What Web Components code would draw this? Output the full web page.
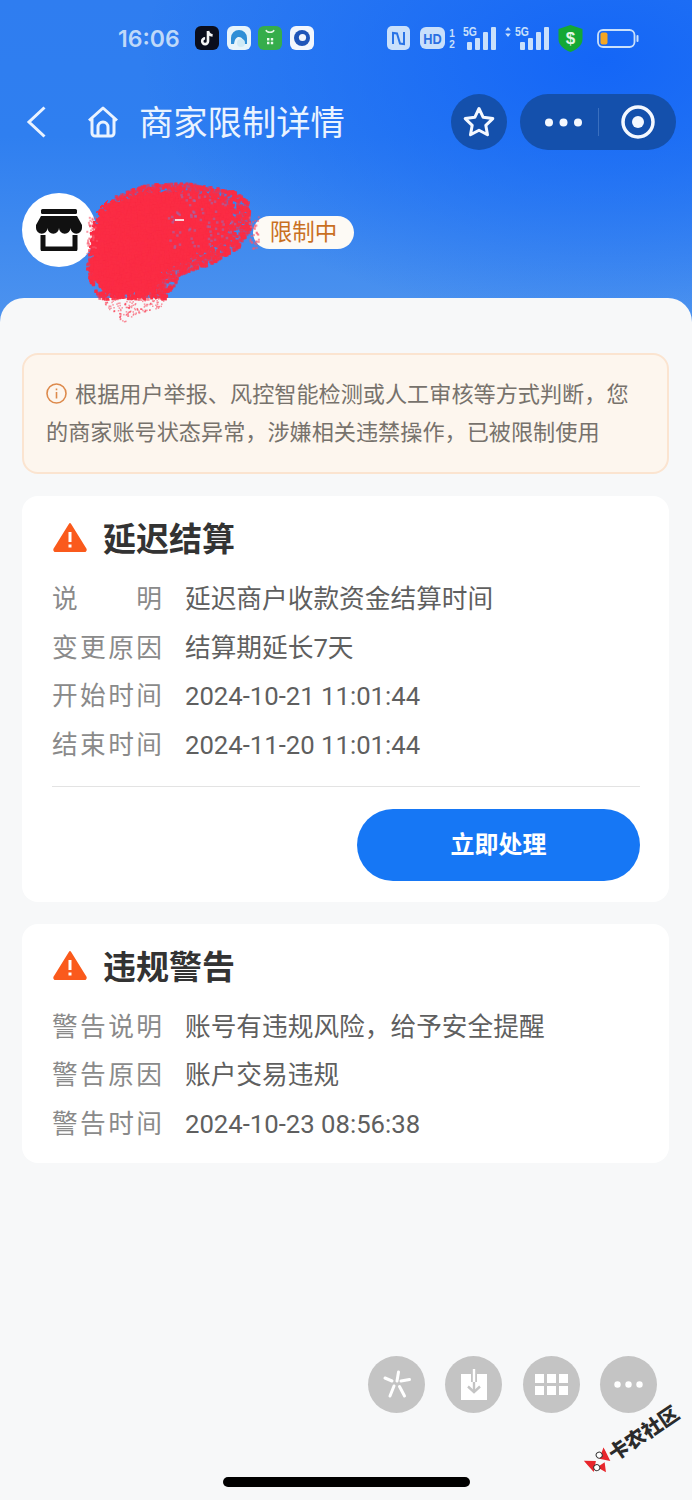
<!DOCTYPE html>
<html lang="zh">
<head>
<meta charset="utf-8">
<title>商家限制详情</title>
<style>
  html, body { margin: 0; padding: 0; background: #f7f8f9; }
  body { width: 692px; height: 1500px; overflow: hidden; font-family: "Noto Sans CJK SC", "Noto Sans", sans-serif; }
</style>
</head>
<body>
<merchant-page>
  <status-strip slot="top"></status-strip>
  <nav-strip slot="top" title="商家限制详情"></nav-strip>
  <merchant-head slot="top" state="限制中"></merchant-head>

  <notice-box>根据用户举报、风控智能检测或人工审核等方式判断，您的商家账号状态异常，涉嫌相关违禁操作，已被限制使用</notice-box>

  <limit-card heading="延迟结算" action="立即处理">
    <info-row label="说明">延迟商户收款资金结算时间</info-row>
    <info-row label="变更原因">结算期延长7天</info-row>
    <info-row label="开始时间">2024-10-21 11:01:44</info-row>
    <info-row label="结束时间">2024-11-20 11:01:44</info-row>
  </limit-card>

  <limit-card heading="违规警告">
    <info-row label="警告说明">账号有违规风险，给予安全提醒</info-row>
    <info-row label="警告原因">账户交易违规</info-row>
    <info-row label="警告时间">2024-10-23 08:56:38</info-row>
  </limit-card>
</merchant-page>
<scribble-mark></scribble-mark>
<float-tools></float-tools>
<water-mark></water-mark>
<home-bar></home-bar>

<script>
// helper: one shadow root per element, markup set in the class
function shadow(el, html) {
  el.attachShadow({mode: 'open'}).innerHTML = html
}

// PAGE SHELL _____________________________________________ */
class MerchantPage extends HTMLElement {
  constructor() {
    super()
    shadow(this, `
    <style>
    :host { display: block; width: 692px; height: 1500px;
      background:
        radial-gradient(460px 260px at 600px 60px, #1466f7 0%, rgba(20,102,247,0) 100%),
        linear-gradient(180deg, #2f7df0 0%, #2f7ff0 40%, #5095ee 100%);
      background-size: 100% 340px; background-repeat: no-repeat; }
    .top { display: block; height: 298px; }
    .sheet { display: flex; flex-direction: column; gap: 22px; box-sizing: border-box;
      height: 1202px; padding: 55px 23px 0 22px; background: #f7f8f9;
      border-radius: 24px 24px 0 0; }
    </style>
    <div class="top"><slot name="top"></slot></div>
    <div class="sheet"><slot></slot></div>`)
  }
}

// STATUS BAR _____________________________________________ */
class StatusStrip extends HTMLElement {
  constructor() {
    super()
    const pale = '#c9e0fb'
    const bars = h => h.map((v, i) => `<rect x="${i * 8}" y="${24 - v}" width="5" height="${v}" rx="1" fill="${pale}"/>`).join('')
    const fiveG = x => `<text transform="translate(${x} 12) scale(.8 1)" font-size="13" fill="${pale}">5G</text>`
    shadow(this, `
    <style>
    :host { display: flex; align-items: center; height: 76px; box-sizing: border-box;
      padding-left: 118px; color: ${pale}; font-family: Inter, "Liberation Sans", sans-serif; }
    .time { width: 77px; font-size: 23px; font-weight: 600; line-height: 24px; margin-top: 1px; color: #bfd9f9; }
    svg { display: block; flex: none; }
    .apps { display: flex; gap: 7.500px; width: 192px; }
    .sys { display: flex; align-items: center; }
    text { font-family: "Liberation Sans", sans-serif; font-weight: 700; }
    </style>
    <span class="time">16:06</span>
    <div class="apps">
      <svg width="24" height="24" viewBox="0 0 24 24"><rect width="24" height="24" rx="6" fill="#0a0d1c"/><path d="M13 5v10.200a2.900 2.900 0 1 1-2.900-2.900M13 5c.3 2.600 2 4.200 4.600 4.400" fill="none" stroke="#f4f4f6" stroke-width="2.600"/></svg>
      <svg width="24" height="24" viewBox="0 0 24 24"><rect width="24" height="24" rx="6" fill="#e6f4fb"/><path d="M4 18V12a8 8 0 0 1 16 0v6h-3c0-4-2-7-5-7s-4 2-5 7z" fill="#2f8fd6"/><circle cx="14" cy="17" r="4" fill="#cfeaf6"/></svg>
      <svg width="24" height="24" viewBox="0 0 24 24"><rect width="24" height="24" rx="6" fill="#35ad4b"/><path d="M8 4c.6 3 7.400 3 8 0" fill="none" stroke="#dff5e2" stroke-width="1.400"/><path d="M9 12h2.400v2.400H9zM12.800 12h2.400v2.400h-2.400zM9 15.800h2.400v2.400H9zM12.800 15.800h2.400v2.400h-2.400z" fill="#eafaec"/></svg>
      <svg width="24" height="24" viewBox="0 0 24 24"><rect width="24" height="24" rx="6" fill="#f2f6fd"/><circle cx="12" cy="12" r="8" fill="#1f55b8"/><circle cx="12.500" cy="11.500" r="3.600" fill="#f2f6fd"/></svg>
    </div>
    <div class="sys">
      <svg width="23" height="24" viewBox="0 0 23 24" style="margin-right:10px"><rect width="23" height="24" rx="5" fill="${pale}"/><path d="M6 18V7l4 .5 3 10 4 .5V6" fill="none" stroke="#2a74e6" stroke-width="2"/></svg>
      <svg width="36" height="24" viewBox="0 0 36 24" style="margin-right:7px"><rect y="1" width="25" height="22" rx="6" fill="${pale}"/><text transform="translate(12.500 17.500) scale(.85 1)" font-size="15" text-anchor="middle" fill="#2a6fe2">HD</text><text x="32" y="11" font-size="10" text-anchor="middle" fill="${pale}">1</text><text x="32" y="22" font-size="10" text-anchor="middle" fill="${pale}">2</text></svg>
      <svg width="34" height="28" viewBox="0 0 34 28" style="margin-right:8px">${fiveG(0)}<g transform="translate(4 2)">${bars([8, 12, 18, 23])}</g></svg>
      <svg width="44" height="28" viewBox="0 0 44 28" style="margin-right:8px"><path d="M3 3l2.800 3.400H.2zM3 13l2.800-3.400H.2z" fill="${pale}"/>${fiveG(10)}<g transform="translate(15 2)">${bars([8, 12, 18, 23])}</g></svg>
      <svg width="27" height="27" viewBox="0 0 27 27" style="margin-right:13px"><path d="M13.500 0l12 4v10c0 6-5 10.500-12 13C6.500 24.500 1.500 20 1.500 14V4z" fill="#14a834"/><text x="13.500" y="19" font-size="17" text-anchor="middle" fill="#e4f7e6">$</text></svg>
      <svg width="42" height="19" viewBox="0 0 42 19"><rect x="1" y="1" width="36.500" height="17" rx="5" fill="none" stroke="${pale}" stroke-width="1.800"/><rect x="3.500" y="3.500" width="7" height="12" rx="2" fill="#f5a623"/><rect x="39.500" y="6" width="2" height="7" rx="1" fill="${pale}"/></svg>
    </div>`)
  }
}

// NAV BAR ________________________________________________ */
class NavStrip extends HTMLElement {
  constructor() {
    super()
    shadow(this, `
    <style>
    :host { display: flex; align-items: center; height: 92px; box-sizing: border-box;
      padding-left: 26px; color: #eaf3ff; }
    svg { display: block; flex: none; }
    .title { font-size: 34.300px; line-height: 44px; width: 312px; margin: -4px 0 0 20px; white-space: nowrap; }
    .star, .pill { display: flex; align-items: center; background: #1450ac; height: 56px; border-radius: 28px; }
    .star { width: 56px; justify-content: center; margin-right: 13px; }
    .pill { width: 156px; box-sizing: border-box; padding-left: 25px; }
    .line { width: 1px; height: 28px; background: #3a6fbf; margin: 0 22px 0 16px; }
    </style>
    <svg width="20" height="32" viewBox="0 0 20 32"><path d="M18.500 1.500L3 16l15.500 14.500" fill="none" stroke="#eaf3ff" stroke-width="3"/></svg>
    <svg width="32" height="32" viewBox="0 0 32 32" style="margin-left:41px"><path d="M2 14.500L16 2l14 12.500M5 12v15a3 3 0 0 0 3 3h16a3 3 0 0 0 3-3V12M11 30V21a5 5 0 0 1 10 0v9" fill="none" stroke="#eaf3ff" stroke-width="3" stroke-linejoin="round"/></svg>
    <span class="title">${this.getAttribute('title')}</span>
    <div class="star"><svg width="34" height="34" viewBox="0 0 34 34"><path d="M17 3.500l4.200 8.800 9.600 1.300-7 6.700 1.700 9.500L17 25.200 8.500 29.800l1.700-9.500-7-6.700 9.600-1.300z" fill="none" stroke="#f4f8ff" stroke-width="3" stroke-linejoin="round"/></svg></div>
    <div class="pill">
      <svg width="37" height="9" viewBox="0 0 37 9"><circle cx="4" cy="4.500" r="4" fill="#f4f8ff"/><circle cx="18.500" cy="4.500" r="4" fill="#f4f8ff"/><circle cx="33" cy="4.500" r="4" fill="#f4f8ff"/></svg>
      <span class="line"></span>
      <svg width="34" height="34" viewBox="0 0 34 34"><circle cx="17" cy="17" r="15" fill="none" stroke="#f4f8ff" stroke-width="3.500"/><circle cx="17" cy="17" r="6" fill="#f4f8ff"/></svg>
    </div>`)
  }
}

// MERCHANT HEAD __________________________________________ */
class MerchantHead extends HTMLElement {
  constructor() {
    super()
    shadow(this, `
    <style>
    :host { display: flex; align-items: center; height: 74px; margin-top: 25px; padding-left: 22px; }
    .avatar { width: 74px; height: 74px; border-radius: 50%; background: #fff;
      display: flex; align-items: center; justify-content: center; flex: none; }
    .state { margin-left: 157px; width: 101px; height: 33px; margin-top: 4px; border-radius: 17px; background: #fdfaf5;
      color: #c9701f; font-size: 22.500px; line-height: 29px; text-align: center; }
    </style>
    <div class="avatar"><svg width="46" height="42" viewBox="0 0 46 42">
      <rect x="5" y="0" width="36" height="5" rx="1.500" fill="#111"/>
      <path d="M5 7h36l5 9v3a5.750 5.750 0 0 1-11.500 0 5.750 5.750 0 0 1-11.500 0 5.750 5.750 0 0 1-11.500 0A5.750 5.750 0 0 1 0 19v-3z" fill="#111"/>
      <path d="M7 26v14h32V26" fill="none" stroke="#111" stroke-width="5" stroke-linejoin="round"/>
    </svg></div>
    <span class="state">${this.getAttribute('state')}</span>`)
  }
}

// NOTICE _________________________________________________ */
class NoticeBox extends HTMLElement {
  constructor() {
    super()
    shadow(this, `
    <style>
    :host { display: block; box-sizing: border-box; height: 121px; padding: 18px 22px 0;
      background: #fdf6ee; border: 2px solid #fbe4d0; border-radius: 16px;
      color: #77726c; font-size: 22.150px; line-height: 38px; }
    svg { vertical-align: -2px; margin-right: 8px; }
    </style>
    <svg width="21" height="21" viewBox="0 0 21 21"><circle cx="10.500" cy="10.500" r="9.500" fill="none" stroke="#dd8a4c" stroke-width="1.600"/><path d="M10.500 5.500v1.800M10.500 9v6.500" stroke="#dd8a4c" stroke-width="1.600"/></svg><slot></slot>`)
  }
}

// CARD ___________________________________________________ */
class LimitCard extends HTMLElement {
  constructor() {
    super()
    const action = this.getAttribute('action')
    shadow(this, `
    <style>
    :host { display: block; box-sizing: border-box; padding: 18px 29px 17px 30px; background: #fff; border-radius: 16px; }
    h2 { display: flex; align-items: center; gap: 16px; height: 46px; margin: 0 0 12px 1px;
      font-size: 33px; font-weight: 700; color: #333; line-height: 46px; }
    svg { display: block; flex: none; }
    .foot { margin-top: 19px; border-top: 1px solid #e3e3e3; padding: 22px 0 4px; display: flex; justify-content: flex-end; }
    button { width: 283px; height: 72px; border: 0; padding: 0 0 4px; border-radius: 36px; background: #1677f5; color: #fff;
      font: 700 24px "Noto Sans CJK SC", sans-serif; }
    </style>
    <h2><svg width="34" height="30" viewBox="0 0 34 30"><path d="M17 2L32.500 27a1.500 1.500 0 0 1-1.300 2.200H2.800A1.500 1.500 0 0 1 1.500 27z" fill="#fa5a1c" stroke="#fa5a1c" stroke-width="2" stroke-linejoin="round"/><path d="M17 10v10M17 22.500v3" stroke="#fff" stroke-width="3"/></svg>${this.getAttribute('heading')}</h2>
    <slot></slot>
    ${action ? `<div class="foot"><button>${action}</button></div>` : ''}`)
  }
}

class InfoRow extends HTMLElement {
  constructor() {
    super()
    // .v keeps the CJK font as its strut so digits sit on the same baseline as the labels
    shadow(this, `
    <style>
    :host { display: flex; height: 48.700px; align-items: center; font-size: 25.700px; white-space: nowrap; }
    .k { width: 110px; margin-right: 23px; color: #8a8a8a; text-align: justify; text-align-last: justify; }
    .v { color: #5f5f5f; }
    .t { font-family: Roboto, "Noto Sans CJK SC", sans-serif; }
    </style>
    <span class="k">${this.getAttribute('label')}</span><span class="v"><span class="t"><slot></slot></span></span>`)
  }
}

// OVERLAYS _______________________________________________ */
class ScribbleMark extends HTMLElement {
  constructor() {
    super()
    // seeded so that every run scatters the same dots
    let seed = 7
    const rnd = () => (seed = (seed * 16807) % 2147483647) / 2147483647
    const outer = [[85,267],[90,237],[98,210],[117,193],[147,183],[187,182],[233,190],[247,200],[250,227],[237,247],[210,263],[180,273],[167,293],[163,307],[137,313],[123,322],[113,313],[100,300],[87,277]]
    const core = [[92,230],[104,205],[147,192],[190,192],[225,200],[236,222],[222,243],[190,260],[166,272],[155,296],[107,296],[90,272]]
    const inside = (x, y, poly) => {
      let hit = false
      for (let i = 0, j = poly.length - 1; i < poly.length; j = i++) {
        const [xi, yi] = poly[i], [xj, yj] = poly[j]
        if ((yi > y) !== (yj > y) && x < (xj - xi) * (y - yi) / (yj - yi) + xi) hit = !hit
      }
      return hit
    }
    let dots = ''
    for (let i = 0; i < 7000; i++) {
      const x = 82 + rnd() * 172, y = 178 + rnd() * 146
      if (!inside(x, y, outer)) continue
      const low = y > 298
      const s = low ? 1.500 : 3
      if (low && rnd() < .45) continue
      const op = low ? .5 : .5 + rnd() * .5
      dots += `<rect x="${x.toFixed(1)}" y="${y.toFixed(1)}" width="${s}" height="${s}" fill="#fb2c44" opacity="${op.toFixed(2)}"/>`
    }
    // a few see-through flecks on the upper right of the blob
    for (let i = 0; i < 90; i++) {
      const x = 165 + rnd() * 78, y = 188 + rnd() * 60
      if (inside(x, y, core)) dots += `<rect x="${x.toFixed(1)}" y="${y.toFixed(1)}" width="2.500" height="2.500" fill="#7f7fd0" opacity=".45"/>`
    }
    // the fringe that runs out onto the avatar and the badge
    for (let i = 0; i < 70; i++) {
      const left = i % 2
      const x = left ? 86 + rnd() * 10 : 248 + rnd() * 10, y = 216 + rnd() * 32
      dots += `<rect x="${x.toFixed(1)}" y="${y.toFixed(1)}" width="2" height="2" fill="#f7566c" opacity=".6"/>`
    }
    shadow(this, `
    <style>
    :host { display: block; position: absolute; left: 0; top: 0; width: 692px; height: 340px; pointer-events: none; }
    svg { display: block; filter: blur(.6px); }
    </style>
    <svg width="692" height="340" viewBox="0 0 692 340">
      <defs><filter id="rough" x="-10%" y="-10%" width="120%" height="120%"><feTurbulence type="fractalNoise" baseFrequency=".25" numOctaves="2" seed="3"/><feDisplacementMap in="SourceGraphic" scale="12"/></filter></defs>
      <polygon points="${core.map(p => p.join(',')).join(' ')}" fill="#fb2c44" filter="url(#rough)"/>
      ${dots}
      <rect x="175" y="219" width="9" height="2" fill="#fbd5da"/>
    </svg>`)
  }
}

class FloatTools extends HTMLElement {
  constructor() {
    super()
    shadow(this, `
    <style>
    :host { position: absolute; left: 368px; top: 1356px; display: flex; gap: 20.300px; }
    div { width: 57px; height: 57px; border-radius: 50%; background: #c4c4c4; display: flex; align-items: center; justify-content: center; }
    svg { display: block; }
    </style>
    <div><svg width="30" height="30" viewBox="0 0 30 30"><path d="M16.500 2l-1.500 9M27.500 9.500l-8.500 1.500M3 8l7 3M12 16l-4 10M17.500 16.500l5 9.500" stroke="#fff" stroke-width="3" stroke-linecap="round" fill="none"/></svg></div>
    <div><svg width="26" height="31" viewBox="0 0 26 31"><path d="M0 5h26v26H0z" fill="#fff"/><path d="M7 17.500l6 5.500 6-5.500" fill="none" stroke="#c4c4c4" stroke-width="2.400"/><path d="M13 12v10" stroke="#c4c4c4" stroke-width="2.400"/><path d="M13 5v8" stroke="#c4c4c4" stroke-width="6"/><path d="M13 0v13" stroke="#fff" stroke-width="2.400"/></svg></div>
    <div><svg width="33" height="21" viewBox="0 0 33 21"><g fill="#fff"><rect width="9" height="9"/><rect x="12" width="9" height="9"/><rect x="24" width="9" height="9"/><rect y="12" width="9" height="9"/><rect x="12" y="12" width="9" height="9"/><rect x="24" y="12" width="9" height="9"/></g></svg></div>
    <div><svg width="29" height="7" viewBox="0 0 29 7"><g fill="#fff"><circle cx="3.500" cy="3.500" r="3.200"/><circle cx="14.500" cy="3.500" r="3.200"/><circle cx="25.500" cy="3.500" r="3.200"/></g></svg></div>`)
  }
}

class WaterMark extends HTMLElement {
  constructor() {
    super()
    shadow(this, `
    <style>
    :host { position: absolute; left: 596px; top: 1455px; display: flex; align-items: center; gap: 1px;
      transform: rotate(-34deg); transform-origin: 0 100%; white-space: nowrap;
      color: #2b2b2b; font: 900 20px/24px "Noto Sans CJK SC", sans-serif; }
    svg { display: block; }
    </style>
    <svg width="24" height="24" viewBox="0 0 24 24"><path d="M0 2l10 7-8 8zM24 2l-10 7 8 8zM7.500 15l4.500 9 4.500-9z" fill="#e8262c"/><circle cx="7" cy="15" r="3" fill="#fff" stroke="#333"/><circle cx="16" cy="6" r="3" fill="#fff" stroke="#333"/></svg><span>卡农社区</span>`)
  }
}

class HomeBar extends HTMLElement {
  constructor() {
    super()
    shadow(this, `<style>:host { position: absolute; left: 223px; top: 1477px; width: 247px; height: 10px; border-radius: 5px; background: #000; }</style>`)
  }
}

customElements.define('merchant-page', MerchantPage)
customElements.define('status-strip', StatusStrip)
customElements.define('nav-strip', NavStrip)
customElements.define('merchant-head', MerchantHead)
customElements.define('notice-box', NoticeBox)
customElements.define('limit-card', LimitCard)
customElements.define('info-row', InfoRow)
customElements.define('scribble-mark', ScribbleMark)
customElements.define('float-tools', FloatTools)
customElements.define('water-mark', WaterMark)
customElements.define('home-bar', HomeBar)
</script>
</body>
</html>
